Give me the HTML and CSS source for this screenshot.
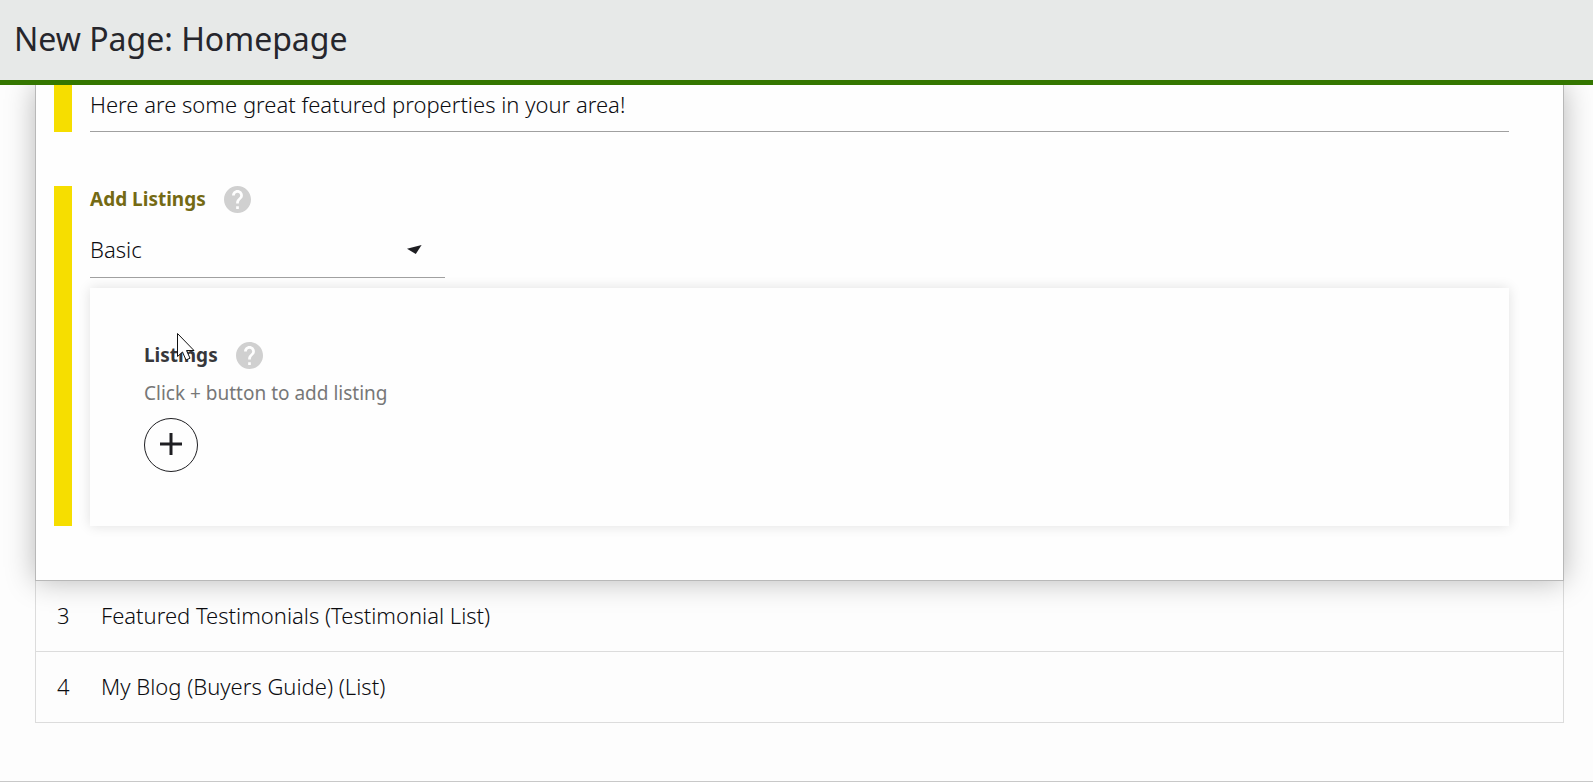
FILE: index.html
```html
<!DOCTYPE html>
<html lang="en">
<head>
    <meta charset="UTF-8">
    <meta name="viewport" content="width=device-width, initial-scale=1.0">
    <title>New Page: Homepage</title>
    <link rel="stylesheet" href="styles.css">
</head>
<body>
    <header class="page-header">
        <h1>New Page: Homepage</h1>
    </header>

    <main class="sections">
        <div class="section-open">
            <div class="field">
                <input type="text" class="text-input" aria-label="Description" value="Here are some great featured properties in your area!">
            </div>

            <div class="field">
                <div class="label-row">
                    <label for="listing-type">Add Listings</label>
                    <button type="button" class="help-btn" aria-label="Help for Add Listings">
                        <svg viewBox="2 2 20 20"><path d="M12 2C6.48 2 2 6.48 2 12s4.48 10 10 10 10-4.48 10-10S17.52 2 12 2zm1 17h-2v-2h2v2zm2.07-7.75l-.9.92C13.45 12.9 13 13.5 13 15h-2v-.5c0-1.1.45-2.1 1.17-2.83l1.24-1.26c.37-.36.59-.86.59-1.41 0-1.1-.9-2-2-2s-2 .9-2 2H8c0-2.21 1.79-4 4-4s4 1.79 4 4c0 .88-.36 1.68-.93 2.25z"/></svg>
                    </button>
                </div>
                <div class="select-wrap">
                    <select id="listing-type">
                        <option>Basic</option>
                    </select>
                    <svg class="arrow" viewBox="0 0 15 9"><path d="M0 3.8L14.6 0 8.8 9z"/></svg>
                </div>

                <div class="card">
                    <div class="label-row">
                        <h2>Listings</h2>
                        <button type="button" class="help-btn" aria-label="Help for Listings">
                            <svg viewBox="2 2 20 20"><path d="M12 2C6.48 2 2 6.48 2 12s4.48 10 10 10 10-4.48 10-10S17.52 2 12 2zm1 17h-2v-2h2v2zm2.07-7.75l-.9.92C13.45 12.9 13 13.5 13 15h-2v-.5c0-1.1.45-2.1 1.17-2.83l1.24-1.26c.37-.36.59-.86.59-1.41 0-1.1-.9-2-2-2s-2 .9-2 2H8c0-2.21 1.79-4 4-4s4 1.79 4 4c0 .88-.36 1.68-.93 2.25z"/></svg>
                        </button>
                        <svg class="cursor" viewBox="0 0 19 29"><path d="M.5 .5v23l5-4.5 3.5 8 4-1.8-3.5-7.7h7.5z"/></svg>
                    </div>
                    <p class="hint">Click + button to add listing</p>
                    <button type="button" class="add-btn" aria-label="Add listing">
                        <svg viewBox="0 0 22 22"><path d="M11 0v22M0 11h22"/></svg>
                    </button>
                </div>
            </div>
        </div>

        <div class="section-row">
            <span class="number">3</span>
            <span>Featured Testimonials (Testimonial List)</span>
        </div>
        <div class="section-row">
            <span class="number">4</span>
            <span>My Blog (Buyers Guide) (List)</span>
        </div>
    </main>
</body>
</html>
```
FILE: styles.css
```css
* {
    box-sizing: border-box;
}

body {
    font-family: "Noto Sans", sans-serif;
    font-size: 22px;
    font-weight: 300;
    color: #0c0c10;
    background: #fdfdfd;
    margin: 0;
    min-height: 100vh;
    border-bottom: 1px solid #c8c8c8;
}

h1, h2, p {
    margin: 0;
}

.page-header {
    position: sticky;
    top: 0;
    z-index: 2;
    display: flex;
    align-items: center;
    height: 85px;
    padding: 0 14px 3px;
    background: #e7e9e8;
    border-bottom: 5px solid #347600;
}

.page-header h1 {
    font-size: 32px;
    font-weight: 400;
    line-height: 44px;
    color: #26262c;
}

.sections {
    margin: 0 29px 0 35px;
}

.section-open {
    position: relative;
    display: flex;
    flex-direction: column;
    gap: 54px;
    padding: 0 54px 54px 18px;
    background: #fefefe;
    border: 1px solid #b8b8b8;
    border-top: none;
    box-shadow: 0 0 28px rgba(0, 0, 0, 0.28);
}

.field {
    border-left: 18px solid #f6de00;
    padding-left: 18px;
}

.text-input {
    display: block;
    width: 100%;
    height: 47px;
    padding: 0 0 8px;
    font: inherit;
    color: inherit;
    background: none;
    border: none;
    border-bottom: 1px solid #a0a0a0;
    border-radius: 0;
    outline: none;
}

.label-row {
    position: relative;
    display: flex;
    align-items: center;
    gap: 18px;
    font-size: 19px;
    line-height: 27px;
}

.label-row label {
    font-weight: 700;
    color: #746a14;
}

.label-row h2 {
    font-size: 19px;
    font-weight: 700;
    color: #37373b;
}

.help-btn {
    width: 27px;
    height: 27px;
    padding: 0;
    background: none;
    border: none;
    cursor: pointer;
}

.help-btn svg {
    display: block;
    fill: #d0d0d0;
}

.select-wrap {
    position: relative;
    width: 355px;
    max-width: 100%;
    margin: 10px 0;
}

.select-wrap select {
    display: block;
    width: 100%;
    height: 55px;
    padding: 0 0 2px;
    font: inherit;
    color: inherit;
    background: none;
    border: none;
    border-bottom: 1px solid #a0a0a0;
    border-radius: 0;
    appearance: none;
    outline: none;
}

.arrow {
    position: absolute;
    right: 23px;
    top: 22px;
    width: 15px;
    height: 9px;
    fill: #1e1e22;
    pointer-events: none;
}

.card {
    padding: 54px;
    background: #fefefe;
    box-shadow: 0 0 12px rgba(0, 0, 0, 0.12);
}

.cursor {
    position: absolute;
    left: 33px;
    top: -9px;
    width: 19px;
    height: 29px;
    fill: #fefefe;
    stroke: #111;
    pointer-events: none;
}

.hint {
    margin: 11px 0;
    font-size: 19px;
    font-weight: 400;
    line-height: 27px;
    color: #777;
}

.add-btn {
    display: flex;
    align-items: center;
    justify-content: center;
    width: 54px;
    height: 54px;
    padding: 0 0 2px;
    background: #fefefe;
    border: 1px solid #1e1e22;
    border-radius: 50%;
    cursor: pointer;
}

.add-btn svg {
    width: 22px;
    height: 22px;
    stroke: #1e1e22;
    stroke-width: 3;
}

.section-row {
    display: flex;
    align-items: center;
    height: 71px;
    padding: 0 21px 2px;
    border: 1px solid #dcdcdc;
    border-top: none;
}

.section-row .number {
    width: 44px;
}
```
